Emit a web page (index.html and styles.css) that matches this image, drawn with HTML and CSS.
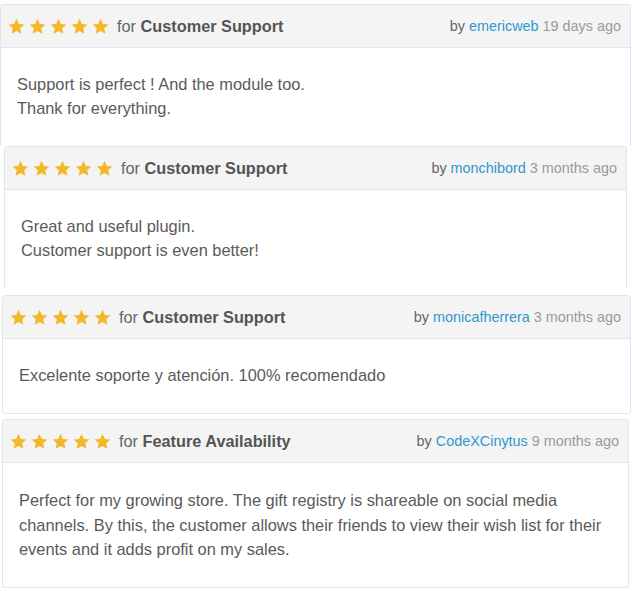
FILE: index.html
```html
<!DOCTYPE html>
<html lang="en">
<head>
<meta charset="utf-8">
<title>Reviews</title>
<link rel="stylesheet" href="styles.css">
</head>
<body>
<svg width="0" height="0" class="defs" aria-hidden="true">
  <defs>
    <symbol id="star" viewBox="0 0 24 24">
      <path d="M12 1.2l3.3 7.2 7.8.8-5.9 5.3 1.7 7.8L12 18.3l-6.9 4 1.7-7.8L.9 9.2l7.8-.8z"/>
    </symbol>
  </defs>
</svg>
<main class="reviews">
  <article class="card card-1 card-open">
    <header class="card-head">
      <div class="rating">
        <span class="stars"><svg><use href="#star"/></svg><svg><use href="#star"/></svg><svg><use href="#star"/></svg><svg><use href="#star"/></svg><svg><use href="#star"/></svg></span>
        <span class="topic">for <b>Customer Support</b></span>
      </div>
      <div class="meta">by <a class="user">emericweb</a> <span class="date">19 days ago</span></div>
    </header>
    <div class="card-body"><p>Support is perfect ! And the module too.<br>Thank for everything.</p></div>
  </article>

  <article class="card card-2 card-open">
    <header class="card-head">
      <div class="rating">
        <span class="stars"><svg><use href="#star"/></svg><svg><use href="#star"/></svg><svg><use href="#star"/></svg><svg><use href="#star"/></svg><svg><use href="#star"/></svg></span>
        <span class="topic">for <b>Customer Support</b></span>
      </div>
      <div class="meta">by <a class="user">monchibord</a> <span class="date">3 months ago</span></div>
    </header>
    <div class="card-body"><p>Great and useful plugin.<br>Customer support is even better!</p></div>
  </article>

  <article class="card card-3">
    <header class="card-head">
      <div class="rating">
        <span class="stars"><svg><use href="#star"/></svg><svg><use href="#star"/></svg><svg><use href="#star"/></svg><svg><use href="#star"/></svg><svg><use href="#star"/></svg></span>
        <span class="topic">for <b>Customer Support</b></span>
      </div>
      <div class="meta">by <a class="user">monicafherrera</a> <span class="date">3 months ago</span></div>
    </header>
    <div class="card-body"><p>Excelente soporte y atención. 100% recomendado</p></div>
  </article>

  <article class="card card-4">
    <header class="card-head">
      <div class="rating">
        <span class="stars"><svg><use href="#star"/></svg><svg><use href="#star"/></svg><svg><use href="#star"/></svg><svg><use href="#star"/></svg><svg><use href="#star"/></svg></span>
        <span class="topic">for <b>Feature Availability</b></span>
      </div>
      <div class="meta">by <a class="user">CodeXCinytus</a> <span class="date">9 months ago</span></div>
    </header>
    <div class="card-body"><p>Perfect for my growing store. The gift registry is shareable on social media channels. By this, the customer allows their friends to view their wish list for their events and it adds profit on my sales.</p></div>
  </article>
</main>
</body>
</html>
```

FILE: styles.css
```css
* { box-sizing: border-box; }

html, body {
  margin: 0;
  padding: 0;
  background: #ffffff;
}

body {
  font-family: "Liberation Sans", Arial, sans-serif;
  font-size: 16px;
  color: #5a5a5a;
  width: 632px;
  height: 591px;
  overflow: hidden;
}

.defs { position: absolute; width: 0; height: 0; }

.reviews {
  display: flex;
  flex-direction: column;
}

.card {
  border: 1px solid #e2e6ea;
  border-radius: 3px;
  background: #fff;
}

.card-open {
  border-bottom: none;
  border-bottom-left-radius: 0;
  border-bottom-right-radius: 0;
}

.card-1 { margin: 4px 1px 0 0; }
.card-2 { margin: 0 5px 0 4px; }
.card-3 { margin: 7px 1px 0 2px; }
.card-4 { margin: 5px 3px 0 2px; }

.card-head {
  display: flex;
  align-items: center;
  justify-content: space-between;
  height: 43px;
  padding: 0 9px 0 7px;
  background: #f4f4f4;
  border-bottom: 1px solid #e2e6ea;
  border-radius: 3px 3px 0 0;
}

.rating {
  display: flex;
  align-items: center;
}

.stars {
  display: flex;
  gap: 4px;
  margin-right: 8px;
}

.stars svg {
  width: 17px;
  height: 17px;
  fill: #f4b72a;
}

.topic {
  color: #666666;
  font-size: 16.3px;
}

.topic b {
  color: #555555;
  font-weight: bold;
}

.meta {
  font-size: 14.4px;
  color: #666666;
}

.user {
  color: #2f98cc;
  text-decoration: none;
}

.date {
  color: #9a9a9a;
}

.card-body {
  padding: 24px 16px 26px;
}

.card-4 .card-body { padding: 25px 16px 25px; }

.card-body p {
  margin: 0;
  font-size: 16.4px;
  line-height: 24px;
}

.card-4 .card-body p { line-height: 24.5px; }
```
